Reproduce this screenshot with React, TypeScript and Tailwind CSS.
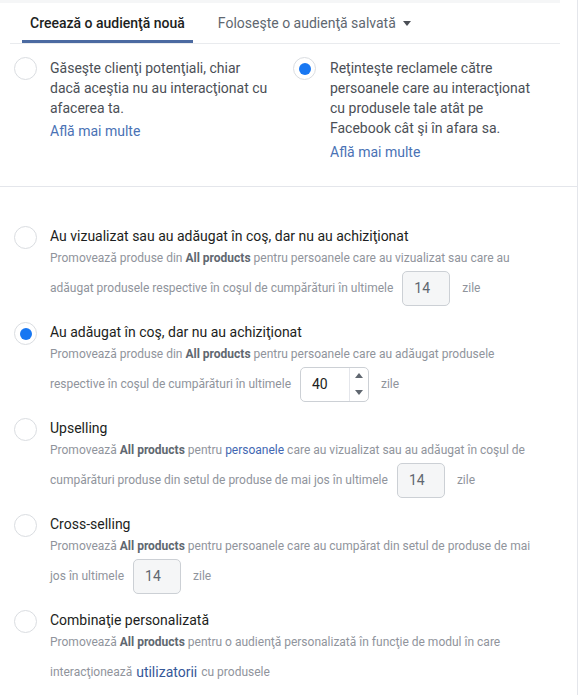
import React from 'react';

function Radio({ checked = false }: { checked?: boolean }) {
  return (
    <span className="flex h-[23px] w-[23px] shrink-0 items-center justify-center rounded-full border border-[#dadde1] bg-white">
      {checked && <span className="h-[12px] w-[12px] rounded-full bg-[#1877f2]" />}
    </span>
  );
}

function DaysBox({ value, spinner = false }: { value: string; spinner?: boolean }) {
  if (spinner) {
    return (
      <span className="flex h-[35px] w-[69px] items-stretch rounded-[5px] border border-[#ccd0d5] bg-white">
        <span className="flex flex-1 items-center pl-[11px] text-[14px] text-[#1c1e21]">{value}</span>
        <span className="flex w-[19px] flex-col border-l border-[#e4e6eb]">
          <span className="flex flex-1 items-center justify-center">
            <svg width="8" height="5" viewBox="0 0 8 5"><path d="M0 5 L4 0 L8 5 Z" fill="#606770" /></svg>
          </span>
          <span className="flex flex-1 items-center justify-center">
            <svg width="8" height="5" viewBox="0 0 8 5"><path d="M0 0 L4 5 L8 0 Z" fill="#606770" /></svg>
          </span>
        </span>
      </span>
    );
  }
  return (
    <span className="flex h-[35px] w-[48px] items-center rounded-[5px] border border-[#ccd0d5] bg-[#f5f6f7] pl-[11px] text-[14px] text-[#606770]">
      {value}
    </span>
  );
}

function Bold({ children }: { children: React.ReactNode }) {
  return <span className="font-bold text-[#606770]">{children}</span>;
}

function Option({
  checked,
  title,
  line1,
  line2,
  box,
  last = false,
}: {
  checked?: boolean;
  title: string;
  line1: React.ReactNode;
  line2: React.ReactNode;
  box?: React.ReactNode;
  last?: boolean;
}) {
  return (
    <div className={`flex ${last ? '' : 'mb-[16px]'}`}>
      <div className="w-[50px] shrink-0 pl-[14px]">
        <Radio checked={checked} />
      </div>
      <div>
        <div className="text-[14px] leading-5 text-[#1c1e21]">{title}</div>
        <div className="h-[24px] text-[12px] leading-[24px] text-[#90949c]">{line1}</div>
        <div className="flex h-[36px] items-center text-[12px] text-[#90949c]">
          {line2}
          {box && (
            <>
              <span className="ml-[9px]">{box}</span>
              <span className="ml-[12px]">zile</span>
            </>
          )}
        </div>
      </div>
    </div>
  );
}

export default function App() {
  return (
    <div className="min-h-[695px] w-[578px] border-r border-[#e4e6eb] bg-white font-['Roboto',sans-serif]">
      <div className="w-[560px]">
        <div className="h-[3px] bg-[#f5f6f7]" />
        <div className="ml-[10px] flex h-[41px] border-b border-[#e9ebee]">
          <div className="ml-[12px] flex items-center border-b-[3px] border-[#4b6aa1] px-[8px] pt-[3px] text-[14px] font-medium text-[#1c1e21]">
            Creează o audienţă nouă
          </div>
          <div className="ml-[17px] flex items-center px-[8px] text-[14px] text-[#606770]">
            Foloseşte o audienţă salvată
            <svg className="ml-[7px]" width="8" height="5" viewBox="0 0 8 5">
              <path d="M0 0 L4 5 L8 0 Z" fill="#4b4f56" />
            </svg>
          </div>
        </div>
      </div>

      <div className="flex border-b border-[#e4e6eb] pb-[24px] pt-[13px]">
        <div className="flex w-[293px] pl-[14px]">
          <Radio />
          <div className="ml-[13px] mt-px text-[14px] leading-5 text-[#4b4f56]">
            Găseşte clienţi potenţiali, chiar
            <br />
            dacă aceştia nu au interacţionat cu
            <br />
            afacerea ta.
            <div className="mt-[3px] text-[#4a72b5]">Află mai multe</div>
          </div>
        </div>
        <div className="flex">
          <Radio checked />
          <div className="ml-[14px] mt-px text-[14px] leading-5 text-[#4b4f56]">
            Reţinteşte reclamele către
            <br />
            persoanele care au interacţionat
            <br />
            cu produsele tale atât pe
            <br />
            Facebook cât şi în afara sa.
            <div className="mt-[4px] text-[#4a72b5]">Află mai multe</div>
          </div>
        </div>
      </div>

      <div className="pt-[39px]">
        <Option
          title="Au vizualizat sau au adăugat în coş, dar nu au achiziţionat"
          line1={
            <>
              Promovează produse din <Bold>All products</Bold> pentru persoanele care au vizualizat sau care au
            </>
          }
          line2="adăugat produsele respective în coşul de cumpărături în ultimele"
          box={<DaysBox value="14" />}
        />
        <Option
          checked
          title="Au adăugat în coş, dar nu au achiziţionat"
          line1={
            <>
              Promovează produse din <Bold>All products</Bold> pentru persoanele care au adăugat produsele
            </>
          }
          line2="respective în coşul de cumpărături în ultimele"
          box={<DaysBox value="40" spinner />}
        />
        <Option
          title="Upselling"
          line1={
            <>
              Promovează <Bold>All products</Bold> pentru <span className="text-[#4267b2]">persoanele</span> care au
              vizualizat sau au adăugat în coşul de
            </>
          }
          line2="cumpărături produse din setul de produse de mai jos în ultimele"
          box={<DaysBox value="14" />}
        />
        <Option
          title="Cross-selling"
          line1={
            <>
              Promovează <Bold>All products</Bold> pentru persoanele care au cumpărat din setul de produse de mai
            </>
          }
          line2="jos în ultimele"
          box={<DaysBox value="14" />}
        />
        <Option
          last
          title="Combinaţie personalizată"
          line1={
            <>
              Promovează <Bold>All products</Bold> pentru o audienţă personalizată în funcţie de modul în care
            </>
          }
          line2={
            <>
              interacţionează <span className="mx-[4px] text-[14px] text-[#365899]">utilizatorii</span> cu produsele
            </>
          }
        />
      </div>
    </div>
  );
}
